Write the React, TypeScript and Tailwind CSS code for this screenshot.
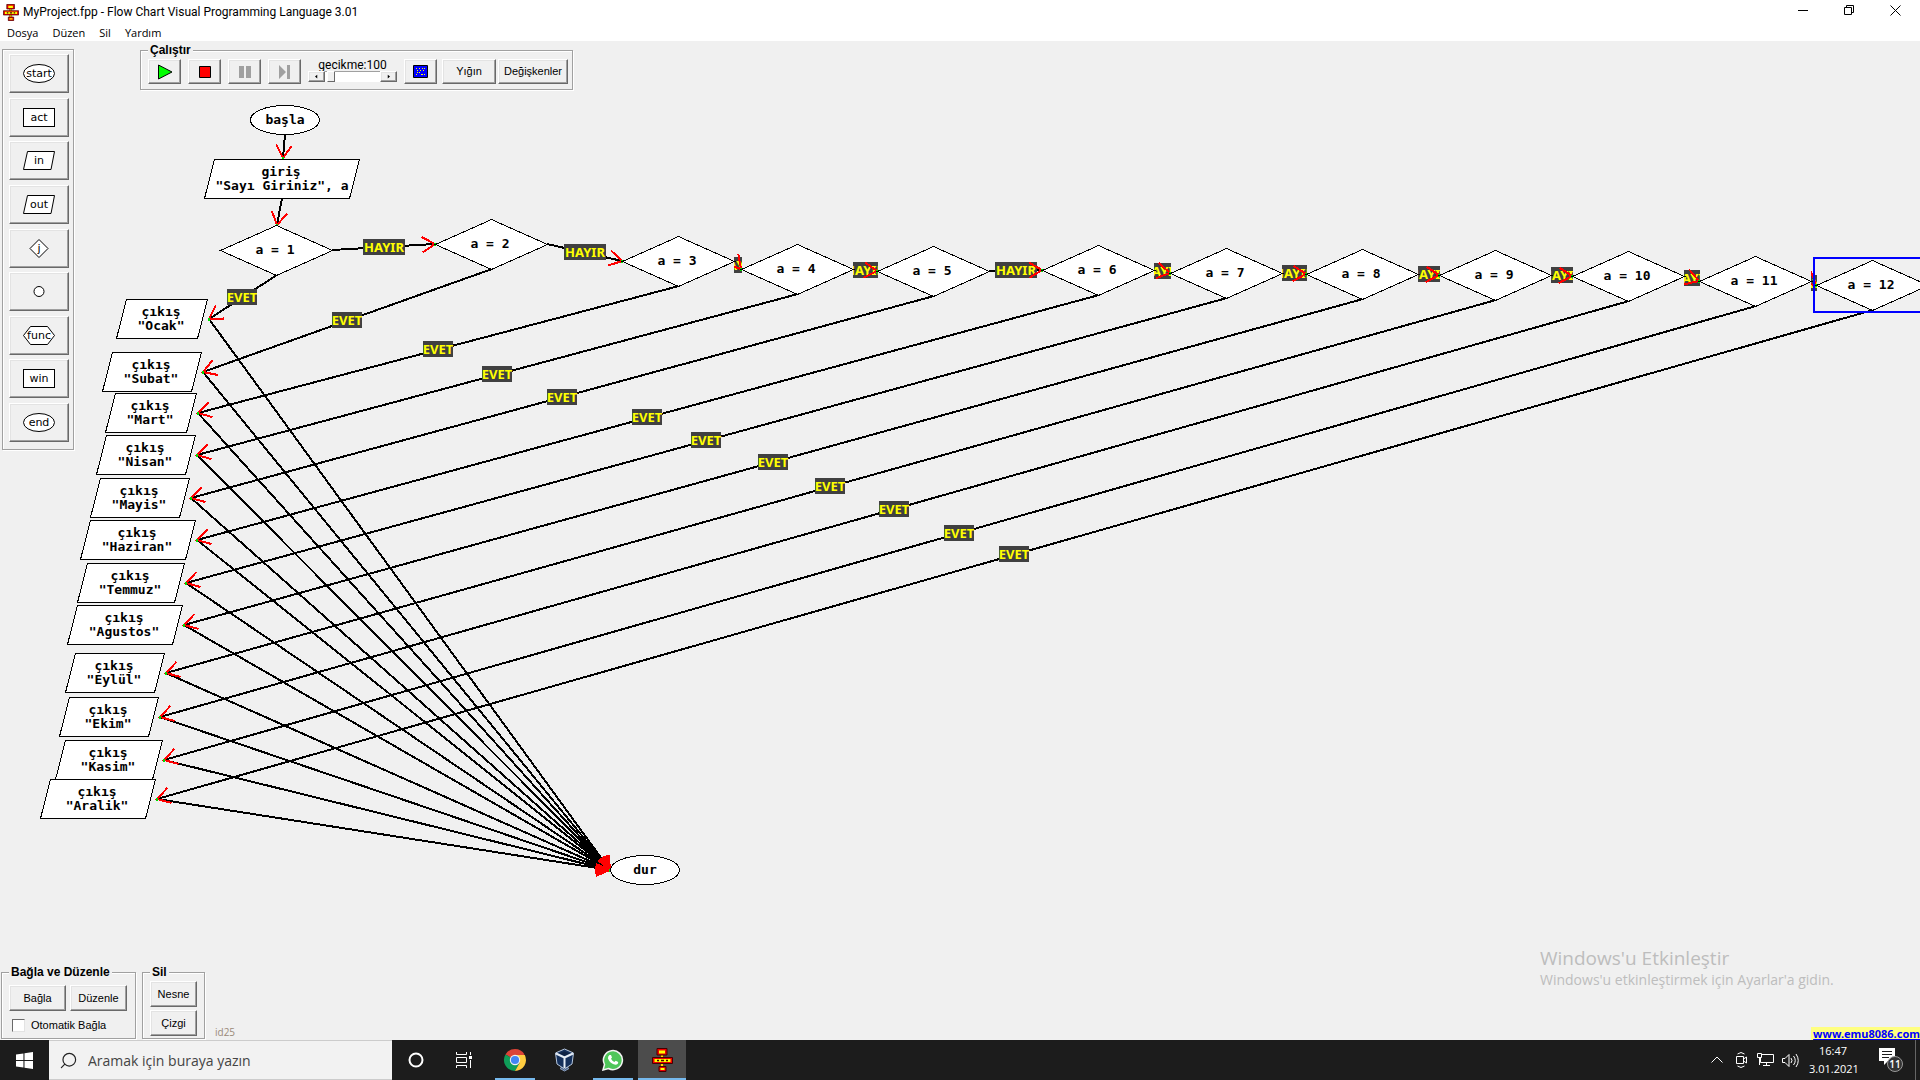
import type { ReactNode } from 'react'
import { Search } from 'lucide-react'

// the canvas starts right under the title and menu bars
const CANVAS_TOP = 41

const DECISIONS = [
  { x: 276, y: 250 },
  { x: 491, y: 244 },
  { x: 678, y: 261 },
  { x: 797, y: 269 },
  { x: 933, y: 271 },
  { x: 1098, y: 270 },
  { x: 1226, y: 273 },
  { x: 1362, y: 274 },
  { x: 1495, y: 275 },
  { x: 1628, y: 276 },
  { x: 1755, y: 281 },
  { x: 1872, y: 285 },
]

const OUTPUTS = [
  { name: 'Ocak', left: 116, right: 207, top: 299 },
  { name: 'Subat', left: 102, right: 201, top: 352 },
  { name: 'Mart', left: 105, right: 196, top: 393 },
  { name: 'Nisan', left: 96, right: 195, top: 435 },
  { name: 'Mayis', left: 90, right: 189, top: 478 },
  { name: 'Haziran', left: 80, right: 195, top: 520 },
  { name: 'Temmuz', left: 77, right: 184, top: 563 },
  { name: 'Agustos', left: 67, right: 182, top: 605 },
  { name: 'Eylül', left: 65, right: 164, top: 653 },
  { name: 'Ekim', left: 59, right: 158, top: 697 },
  { name: 'Kasim', left: 55, right: 162, top: 740 },
  { name: 'Aralik', left: 40, right: 155, top: 779 },
]

const STOP = { x: 645, y: 870 }

type Segment = { x1: number; y1: number; x2: number; y2: number }

function Line({ x1, y1, x2, y2 }: Segment) {
  return <line x1={x1} y1={y1} x2={x2} y2={y2} stroke="#000" strokeWidth="2" />
}

function Head({ x1, y1, x2, y2 }: Segment) {
  const back = Math.atan2(y1 - y2, x1 - x2)
  const barb = (a: number) => `${x2 + 15 * Math.cos(back + a)},${y2 + 15 * Math.sin(back + a)}`
  return (
    <>
      <polyline points={`${barb(0.54)} ${x2},${y2} ${barb(-0.54)}`} fill="none" stroke="#f00" strokeWidth="2" />
      <rect x={x2 - 1} y={y2 - 1} width="2" height="3" fill="#0d0" />
    </>
  )
}

function Arrow({ label, ...seg }: Segment & { label?: string }) {
  const mx = Math.round((seg.x1 + seg.x2) / 2) - (label === 'EVET' ? 1 : 0)
  const my = Math.floor((seg.y1 + seg.y2) / 2)
  const w = label === 'HAYIR' ? 42 : 30
  return (
    <g>
      <Line {...seg} />
      {label && (
        <>
          <rect x={mx - w / 2} y={my - 8} width={w} height="16" fill="#404040" />
          <text x={mx} y={my + 5} textAnchor="middle" fill="#ff0" className="font-['Noto_Sans',sans-serif] text-[13px] font-bold">
            {label}
          </text>
        </>
      )}
      <Head {...seg} />
    </g>
  )
}

function NodeText({ x, y, children }: { x: number; y: number; children: ReactNode }) {
  return (
    <text x={x} y={y} textAnchor="middle" className="whitespace-pre font-['DejaVu_Sans_Mono',monospace] text-[13px] font-bold">
      {children}
    </text>
  )
}

function Slanted({ left, right, top }: { left: number; right: number; top: number }) {
  return (
    <polygon
      points={`${left + 10.5},${top + 0.5} ${right + 0.5},${top + 0.5} ${right - 9.5},${top + 39.5} ${left + 0.5},${top + 39.5}`}
      fill="#fff"
      stroke="#000"
    />
  )
}

function FlowChart() {
  const toStop = OUTPUTS.map((o) => ({ x1: o.right + 2, y1: o.top + 20, x2: STOP.x - 35, y2: STOP.y }))
  return (
    <svg className="absolute inset-0 h-full w-full" role="img" aria-label="Akış şeması" shapeRendering="crispEdges">
      <g transform={`translate(0 ${-CANVAS_TOP})`}>
        {/* all heads go over all lines, they meet at the same point */}
        {toStop.map((s, i) => <Line key={i} {...s} />)}
        {toStop.map((s, i) => <Head key={i} {...s} />)}
        {OUTPUTS.map((o, i) => (
          <Arrow key={o.name} x1={DECISIONS[i].x + 1} y1={DECISIONS[i].y + 25} x2={o.right + 2} y2={o.top + 20} label="EVET" />
        ))}
        {DECISIONS.slice(1).map((d, i) => {
          const from = DECISIONS[i].x + 56
          const to = d.x - 56
          return (
            <g key={i}>
              <clipPath id={`gap-${i}`}>
                <rect x={from} y="200" width={to - from + 1} height="120" />
              </clipPath>
              <g clipPath={`url(#gap-${i})`}>
                <Arrow x1={from} y1={DECISIONS[i].y} x2={to} y2={d.y} label="HAYIR" />
              </g>
            </g>
          )
        })}
        <Arrow x1={285} y1={134} x2={283} y2={158} />
        <Arrow x1={282} y1={198} x2={277} y2={225} />

        <ellipse cx="285" cy="120" rx="34.5" ry="14.5" fill="#fff" stroke="#000" />
        <NodeText x={285} y={124}>başla</NodeText>
        <Slanted left={204} right={359} top={159} />
        <NodeText x={281} y={176}>giriş</NodeText>
        <NodeText x={282} y={190}>{'"Sayı Giriniz", a'}</NodeText>
        {DECISIONS.map((d, i) => (
          <g key={i}>
            <polygon
              points={`${d.x - 55.5},${d.y + 0.5} ${d.x + 0.5},${d.y - 24.5} ${d.x + 56.5},${d.y + 0.5} ${d.x + 0.5},${d.y + 25.5}`}
              fill="#fff"
              stroke="#000"
            />
            <NodeText x={d.x - 1} y={d.y + 4}>{`a = ${i + 1}`}</NodeText>
          </g>
        ))}
        <rect x="1814" y="258" width="116" height="54" fill="none" stroke="#00f" strokeWidth="2" />
        {OUTPUTS.map((o) => (
          <g key={o.name}>
            <Slanted left={o.left} right={o.right} top={o.top} />
            <NodeText x={Math.floor((o.left + o.right) / 2)} y={o.top + 17}>çıkış</NodeText>
            <NodeText x={Math.floor((o.left + o.right) / 2)} y={o.top + 31}>{`"${o.name}"`}</NodeText>
          </g>
        ))}
        <ellipse cx={STOP.x} cy={STOP.y} rx="34.5" ry="14.5" fill="#fff" stroke="#000" />
        <NodeText x={STOP.x} y={STOP.y + 4}>dur</NodeText>
      </g>
    </svg>
  )
}

const RAISED =
  'flex items-center justify-center bg-[#f0f0f0] border border-t-white border-l-white border-r-[#696969] border-b-[#696969] shadow-[inset_-1px_-1px_0_#a0a0a0,inset_1px_1px_0_#e3e3e3]'

const ETCHED = 'border border-[#a0a0a0] shadow-[1px_1px_0_#fff,inset_1px_1px_0_#fff]'

function Button({ className, label, children }: { className: string; label?: string; children: ReactNode }) {
  return (
    <button type="button" aria-label={label} className={`${RAISED} ${className}`}>
      {children}
    </button>
  )
}

const SHAPES = {
  ellipse: <ellipse cx="16" cy="9.500" rx="15.500" ry="9" />,
  rect: <rect x=".5" y=".5" width="31" height="18" />,
  slant: <path d="M4.500 .5h27L28 18.500H.5z" />,
  diamond: <path d="M16 .5l9 9-9 9-9-9z" />,
  circle: <circle cx="16" cy="9.500" r="5" />,
  hexagon: <path d="M7.500 .5h17l7 9-7 9h-17l-7-9z" />,
}

const PALETTE: { text: string; name: string; shape: keyof typeof SHAPES }[] = [
  { text: 'start', name: 'start', shape: 'ellipse' },
  { text: 'act', name: 'act', shape: 'rect' },
  { text: 'in', name: 'in', shape: 'slant' },
  { text: 'out', name: 'out', shape: 'slant' },
  { text: 'j', name: 'jump', shape: 'diamond' },
  { text: '', name: 'connector', shape: 'circle' },
  { text: 'func', name: 'func', shape: 'hexagon' },
  { text: 'win', name: 'win', shape: 'rect' },
  { text: 'end', name: 'end', shape: 'ellipse' },
]

function Palette() {
  return (
    <aside className={`flex h-[401px] w-[72px] flex-col justify-between pt-1 pr-1 pb-[7px] pl-1.5 ${ETCHED}`}>
      {PALETTE.map((p) => (
        <Button key={p.name} label={p.name} className="h-[39px] w-full">
          <svg width="32" height="19" viewBox="0 0 32 19" className="overflow-visible" fill="#fff" stroke="#000">
            {SHAPES[p.shape]}
            <text x="16" y="13" textAnchor="middle" fill="#000" stroke="none" className="font-['DejaVu_Sans',sans-serif] text-[11px]">
              {p.text}
            </text>
          </svg>
        </Button>
      ))}
    </aside>
  )
}

function RunBar() {
  return (
    <fieldset className={`h-[48px] w-[433px] pr-1 pl-[7px] ${ETCHED}`}>
      <legend className="bg-[#f0f0f0] px-0.5 text-[12px] font-bold leading-4">Çalıştır</legend>
      <div className="flex items-start gap-[7px] pt-px">
        <Button label="Çalıştır" className="h-[25px] w-[33px]">
          <svg width="16" height="16" viewBox="0 0 16 16"><path d="M1.500 1v14L15 8z" fill="#0f0" stroke="#000" /></svg>
        </Button>
        <Button label="Durdur" className="h-[25px] w-[33px]">
          <svg width="14" height="14" viewBox="0 0 14 14"><path d="M1.500 1.500h11v11h-11z" fill="#f00" stroke="#000" /></svg>
        </Button>
        <Button label="Duraklat" className="h-[25px] w-[33px]">
          <svg width="14" height="14" viewBox="0 0 14 14" fill="#a0a0a0"><path d="M1 1h5v12H1zM8 1h5v12H8z" /></svg>
        </Button>
        <Button label="Adım" className="h-[25px] w-[33px]">
          <svg width="14" height="14" viewBox="0 0 14 14" fill="#a0a0a0"><path d="M1 0l7 7-7 7zM9 0h3v14H9z" /></svg>
        </Button>
        <div className="flex w-[89px] flex-col">
          <label htmlFor="delay" className="text-center font-['Roboto',sans-serif] text-[12px] leading-3">gecikme:100</label>
          <div className="flex h-[11px]">
            <Button label="Azalt" className="w-[17px]">
              <svg width="3" height="5" viewBox="0 0 4 5"><path d="M3 0v5L0 2.500z" /></svg>
            </Button>
            <input
              id="delay"
              type="range"
              defaultValue={5}
              className="h-full min-w-0 flex-1 appearance-none bg-white shadow-[inset_0_1px_0_#a0a0a0] [&::-webkit-slider-thumb]:h-[11px] [&::-webkit-slider-thumb]:w-2 [&::-webkit-slider-thumb]:appearance-none [&::-webkit-slider-thumb]:border [&::-webkit-slider-thumb]:border-t-white [&::-webkit-slider-thumb]:border-l-white [&::-webkit-slider-thumb]:border-r-[#696969] [&::-webkit-slider-thumb]:border-b-[#696969] [&::-webkit-slider-thumb]:bg-[#f0f0f0]"
            />
            <Button label="Artır" className="w-[17px]">
              <svg width="3" height="5" viewBox="0 0 4 5"><path d="M1 0v5l3-2.500z" /></svg>
            </Button>
          </div>
        </div>
        <Button label="Ekran" className="h-[25px] w-[33px]">
          <svg width="15" height="13" viewBox="0 0 15 13">
            <path d="M.5.5h14v12H.5z" fill="#00f" stroke="#000" />
            <path d="M3 3.500h1M6 3.500h1M9 3.500h1M11 3.500h1M4 5.500h1M7 5.500h1M10 5.500h1M4 7.500h1M6 7.500h1M3 9.500h1M8 9.500h2M11 9.500h1" stroke="#ff0" />
          </svg>
        </Button>
        <div className="-ml-0.5 flex gap-0.5">
          <Button className="h-[25px] w-[54px]">Yığın</Button>
          <Button className="h-[25px] w-[70px]">Değişkenler</Button>
        </div>
      </div>
    </fieldset>
  )
}

function AppIcon({ className }: { className: string }) {
  return (
    <svg viewBox="0 0 21 24" preserveAspectRatio="none" className={className} aria-hidden="true">
      <path d="M8.500 6h3v14h-3z" fill="#fd0" stroke="#400" strokeWidth=".5" />
      <path d="M5 .5h10v6.500H5zM.5 9.500h20v6H.5zM7 18.500h7v5H7z" fill="#e00" stroke="#400" />
      <path d="M7 2.500h6v3H7zM2.500 11h16v3h-16zM8.500 20h4v2h-4z" fill="#ff0" />
      <path d="M5 12.500h2M9 12.500h3M14 12.500h2" stroke="#400" strokeWidth="1.500" />
    </svg>
  )
}

function TitleBar() {
  return (
    <header className="flex h-6 items-center bg-white pl-[3px]">
      <AppIcon className="h-[17px] w-4" />
      <h1 className="flex-1 pl-1 font-['Roboto',sans-serif] text-[12px]">MyProject.fpp - Flow Chart Visual Programming Language 3.01</h1>
      <div className="flex h-full pr-0.5 pb-1">
        <button type="button" aria-label="Simge durumuna küçült" className="flex w-[46px] items-center justify-center">
          <svg width="11" height="11" viewBox="0 0 11 11" stroke="#000"><path d="M0 5.500h10" /></svg>
        </button>
        <button type="button" aria-label="Önceki boyut" className="flex w-[46px] items-center justify-center">
          <svg width="11" height="11" viewBox="0 0 11 11" fill="none" stroke="#000"><path d="M.5 2.500h7v7h-7zM2.500 2.500v-2h7v7h-2" /></svg>
        </button>
        <button type="button" aria-label="Kapat" className="flex w-[46px] items-center justify-center">
          <svg width="11" height="11" viewBox="0 0 11 11" stroke="#000"><path d="M.5.5l10 10M10.500.5l-10 10" /></svg>
        </button>
      </div>
    </header>
  )
}

function ChromeLogo() {
  return (
    <svg width="24" height="24" viewBox="0 0 24 24">
      <path d="M12 12L2.470 6.500A11 11 0 0 1 21.530 6.500z" fill="#db4437" />
      <path d="M12 12L2.470 6.500A11 11 0 0 0 12 23l4.760-8.250z" fill="#0f9d58" />
      <path d="M12 7h9.800A11 11 0 0 1 12 23l4.500-8z" fill="#ffcd40" />
      <circle cx="12" cy="12" r="5.200" fill="#f1f1f1" />
      <circle cx="12" cy="12" r="4.100" fill="#4285f4" />
    </svg>
  )
}

function VirtualBoxLogo() {
  return (
    <svg width="21" height="24" viewBox="0 0 21 24" strokeLinejoin="round">
      <path d="M6 20.500l4.500 2.500 4.500-2.500-4.500-3z" fill="#4b6287" stroke="#8aa0c0" />
      <path d="M10.500 1l9 4-1.500 11-7.500 5L3 16 1.500 5z" fill="#14305c" stroke="#b9c9df" />
      <path d="M10.500 3.500l5.500 2-5.500 2.500L5 5.500z" fill="#0c2144" />
      <path d="M2 5.500l8.500 4 8.500-4M10.500 9.500V20" fill="none" stroke="#e4ecf6" strokeWidth="2" />
    </svg>
  )
}

function TaskButton({ label, open, active, children }: { label: string; open?: boolean; active?: boolean; children: ReactNode }) {
  return (
    <button
      type="button"
      aria-label={label}
      className={`flex h-10 w-12 flex-col items-center ${active ? 'bg-[#4c4c4c]' : ''}`}
    >
      <span className="flex flex-1 items-center">{children}</span>
      {open && <span className={`-mt-0.5 h-0.5 bg-[#76b9ed] ${active ? 'w-full' : 'w-10'}`} />}
    </button>
  )
}

function Taskbar() {
  return (
    <footer className="flex h-10 items-center bg-[#1c1c1c] font-['Open_Sans',sans-serif] text-white">
      <button type="button" aria-label="Başlat" className="flex h-full w-[49px] items-center justify-center">
        <svg width="17" height="17" viewBox="0 0 16 16" fill="#fff"><path d="M0 2.300L7 1.300V7.500H0zM8 1.100L16 0V7.500H8zM0 8.500H7V14.700L0 13.700zM8 8.500H16V16L8 14.900z" /></svg>
      </button>
      <div className="flex h-full w-[343px] items-center gap-2.5 border-y border-[#ccc] bg-[#f2f2f2] pl-2.5 text-[#222]">
        <Search size={19} strokeWidth={1.5} className="-scale-x-100" />
        <input
          type="text"
          aria-label="Ara"
          placeholder="Aramak için buraya yazın"
          className="min-w-0 flex-1 bg-transparent text-[14px] outline-none placeholder:text-[#444]"
        />
      </div>
      <TaskButton label="Cortana">
        <svg width="16" height="16" viewBox="0 0 16 16"><circle cx="8" cy="8" r="6.500" fill="none" stroke="#fff" strokeWidth="2" /></svg>
      </TaskButton>
      <TaskButton label="Görev görünümü">
        <svg width="17" height="16" viewBox="0 0 17 16" fill="none" stroke="#fff">
          <path d="M.5 0v2.500h10V0M.5 5.500h10v5H.5zM.5 16v-2.500h10V16M14.500 0v3M14.500 8v8" />
          <path d="M13 4h3v3h-3z" fill="#fff" stroke="none" />
        </svg>
      </TaskButton>
      <div className="flex gap-px pl-[3px]">
        <TaskButton label="Google Chrome" open><ChromeLogo /></TaskButton>
        <TaskButton label="VirtualBox"><VirtualBoxLogo /></TaskButton>
        <TaskButton label="WhatsApp" open>
          <svg width="22" height="22" viewBox="0 0 22 22">
            <path d="M1 21l1.500-5.500a9.500 9.500 0 1 1 4 4z" fill="#4fc65a" stroke="#f4f4f4" strokeWidth="1.500" />
            <path d="M7.500 6l1.500 0 1 2.500-1 1.300q1.200 2.200 3.300 3.200l1.400-1.300 2.500 1.200q0 2.600-2.700 2.800Q8 15 6 9.500 5.800 7 7.500 6z" fill="#fff" />
          </svg>
        </TaskButton>
        <TaskButton label="Flow Chart" open active><AppIcon className="h-6 w-[21px]" /></TaskButton>
      </div>

      <div className="ml-auto flex h-full items-center">
        <svg width="12" height="8" viewBox="0 0 12 8" fill="none" stroke="#fff" className="mr-[13px]"><path d="M.5 6.500L6 1l5.500 5.500" /></svg>
        <svg width="11" height="16" viewBox="0 0 11 16" fill="none" stroke="#fff" className="mr-2.5">
          <path d="M.5 4.500h7v7h-7zM7.500 7l3-2v6l-3-2M1.500 2q3.500-3 7 0M1.500 14q3.500 3 7 0" />
        </svg>
        <svg width="17" height="14" viewBox="0 0 17 14" fill="none" stroke="#fff" className="mr-2">
          <path d="M5 1.500h11.500v8H3.500V5M.5.500h4v4h-4zM9.500 9.500v3M6 12.500h7M2.500 5v7" />
        </svg>
        <svg width="17" height="15" viewBox="0 0 17 15" fill="none" stroke="#fff" className="mr-2.5">
          <path d="M.5 5.500h2.500l4-4v12l-4-4H.5zM9 5q2 2.500 0 5M11.500 3q3.500 4.500 0 9M14 1q4.500 6.500 0 13" />
        </svg>
        <time dateTime="2021-01-03T16:47" className="w-12 text-center text-[11px] leading-[18px]">
          16:47
          <br />
          3.01.2021
        </time>
        <button type="button" aria-label="11 yeni bildirim" className="relative ml-[22px] mr-3 h-6 w-6">
          <svg width="24" height="24" viewBox="0 0 24 24">
            <path d="M0 0h16v13H9l-4 4v-4H0z" fill="#fff" />
            <path d="M3 3.500h10M3 6.500h10M3 9.500h7" stroke="#1c1c1c" />
          </svg>
          <span className="absolute right-0 bottom-0 flex size-4 items-center justify-center rounded-full border border-[#999] bg-[#333] text-[10px] font-semibold">11</span>
        </button>
        <span className="mr-1 h-full w-px bg-[#666]" />
      </div>
    </footer>
  )
}

export default function App() {
  return (
    <div className="flex min-h-screen flex-col overflow-hidden bg-[#f0f0f0] font-['Liberation_Sans',sans-serif] text-[11px] text-black">
      <TitleBar />
      <nav className="flex h-[17px] gap-3.5 bg-white pl-[7px] font-['Open_Sans',sans-serif] text-[11px] leading-[17px]">
        <a href="#dosya">Dosya</a>
        <a href="#duzen">Düzen</a>
        <a href="#sil">Sil</a>
        <a href="#yardim">Yardım</a>
      </nav>

      <main className="relative flex flex-1 flex-col justify-between">
        <FlowChart />

        <div className="relative flex items-start gap-[66px] pl-0.5">
          <div className="pt-2">
            <Palette />
          </div>
          <div className="pt-px">
            <RunBar />
          </div>
        </div>

        <div className="relative flex items-end">
          <div className="flex items-end gap-1.5 pb-px pl-px">
            <fieldset className={`h-[75px] w-[135px] pl-[7px] ${ETCHED}`}>
              <legend className="bg-[#f0f0f0] px-0.5 text-[12px] font-bold leading-4">Bağla ve Düzenle</legend>
              <div className="flex gap-1 pt-[5px]">
                <Button className="h-[26px] w-[57px]">Bağla</Button>
                <Button className="h-[26px] w-[57px]">Düzenle</Button>
              </div>
              <label className="mt-1.5 flex items-center gap-1.5 pl-[3px]">
                <input
                  type="checkbox"
                  className="size-[13px] appearance-none border border-t-[#696969] border-l-[#696969] border-r-[#e3e3e3] border-b-[#e3e3e3] bg-white"
                />
                Otomatik Bağla
              </label>
            </fieldset>
            <fieldset className={`h-[75px] w-[63px] px-[7px] ${ETCHED}`}>
              <legend className="bg-[#f0f0f0] px-0.5 text-[12px] font-bold leading-4">Sil</legend>
              <div className="flex flex-col gap-[3px] pt-px">
                <Button className="h-[26px] w-full">Nesne</Button>
                <Button className="h-[26px] w-full">Çizgi</Button>
              </div>
            </fieldset>
            <span className="pl-1 font-['Open_Sans',sans-serif] text-[10px] leading-[13px] text-[#9a8a78]">id25</span>
          </div>
          <a
            href="http://www.emu8086.com"
            className="ml-auto bg-[#ffff80] pl-0.5 font-['Noto_Sans',sans-serif] text-[11px] font-bold leading-[13px] text-[#00f] underline"
          >
            www.emu8086.com
          </a>
        </div>

        <div className="pointer-events-none absolute right-20 bottom-[50px] w-[300px] whitespace-nowrap font-['Open_Sans',sans-serif] text-[#bdbdbd]">
          <p className="text-[19px] leading-6">Windows'u Etkinleştir</p>
          <p className="text-[14px] leading-5">Windows'u etkinleştirmek için Ayarlar'a gidin.</p>
        </div>
      </main>

      <Taskbar />
    </div>
  )
}
